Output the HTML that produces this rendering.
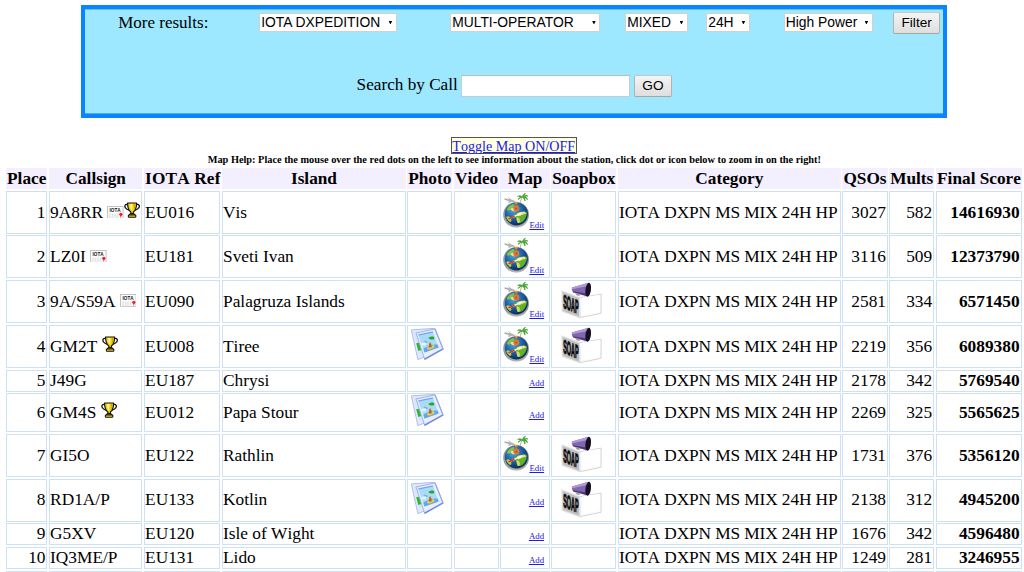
<!DOCTYPE html>
<html lang="en"><head><meta charset="utf-8"><title>IOTA Contest Results</title>
<style>
html,body{margin:0;padding:0;background:#fff;}
body{width:1024px;height:572px;overflow:hidden;position:relative;font-family:"Liberation Serif",serif;font-size:17.25px;color:#000;font-kerning:none;}
#panel{position:absolute;left:81px;top:5px;width:858px;height:105px;border:4px solid #0a84ff;background:#9ee8ff;box-shadow:inset 0 1px 0 #63c0ff,inset 0 -1px 0 #45acff;}
#panel{margin:0;padding:0;}
#panel>*{position:absolute;white-space:nowrap;margin:0;}
.lbl{font-size:17px;line-height:20px;}
#more{left:33.2px;top:3.5px;}
#sbc{left:271.6px;top:65.8px;font-size:17.2px;}
.sw{box-sizing:border-box;height:18.5px;top:4.3px;background:#fff;border:1px solid #d2d0cc;border-radius:1px;}
.sw select{-webkit-appearance:none;appearance:none;position:absolute;left:0;top:-2px;box-sizing:border-box;width:100%;height:18.5px;margin:0;background:transparent;border:0;border-radius:0;font-family:"Liberation Sans",sans-serif;font-size:13.85px;padding:0 0 0 1.2px;color:#000;outline:0;}
.sw i{position:absolute;right:3.2px;top:6.5px;width:3.8px;height:3.7px;background:#000;clip-path:polygon(0 0,100% 0,50% 100%);}
#s1{left:174px;width:137.5px;}
#s2{left:365px;width:150px;}
#s3{left:540px;width:62.5px;}
#s4{left:621px;width:43.5px;}
#s5{left:698.5px;width:89px;}
.btn{box-sizing:border-box;padding:0;-webkit-appearance:none;appearance:none;font-family:"Liberation Sans",sans-serif;font-size:13.65px;text-align:center;color:#000;border:1px solid #b4b2b0;border-top-color:#c6c6c6;border-bottom-color:#a8a4a0;border-radius:2px;background:linear-gradient(#f4f4f4,#dedede);}
#filter{left:808px;top:3px;width:47.3px;height:21.7px;line-height:19.4px;}
#go{left:548.6px;top:66px;width:38.6px;height:21.7px;line-height:19.6px;}
#inp{box-sizing:border-box;padding:0;-webkit-appearance:none;appearance:none;outline:0;left:376.2px;top:66px;width:168.6px;height:21.7px;background:#fff;border:1px solid #c4ccd4;border-top-color:#b4bcc4;}
#toggle{position:absolute;left:451px;top:137px;width:123.5px;height:14.5px;border:1px solid #55554a;background:#ffffe1;font-size:14.1px;line-height:17.4px;color:#1a1aee;text-decoration:underline;text-align:center;white-space:nowrap;}
#help{position:absolute;left:207.7px;top:153.5px;font-size:10.32px;font-weight:bold;line-height:12px;white-space:nowrap;}
#t{position:absolute;left:6.05px;top:167.75px;border-collapse:separate;border-spacing:0;table-layout:fixed;}
#t th{box-sizing:border-box;background:#f3effe;font-weight:bold;padding:0 1px;height:21.05px;line-height:19.5px;white-space:nowrap;overflow:visible;}
#t td{border:1px solid #cde0f5;padding:0;font-size:17.33px;line-height:19.5px;white-space:nowrap;vertical-align:middle;box-sizing:border-box;}
#t td.r{text-align:right;}
#t td.b{font-weight:bold;}
#t svg{vertical-align:baseline;}
a.e{font-size:8.85px;line-height:10px;color:#2418ee;text-decoration:underline;}
svg.soap{margin-left:8.5px;}
svg.globe{margin-left:1px;}
#t td.r{padding-right:.9px;}#t td.b{padding-right:1.3px;}
svg.photo{margin-left:2.9px;}
a.add{margin-left:27.5px;}
#t tr.g td{border:0;padding:0;line-height:0;font-size:0;height:auto;}
#t td.sp{border:0;padding:0;background:none;}
#t td.cat{letter-spacing:-.11px;}
#t th.ir{letter-spacing:.15px;}
#t svg.card{vertical-align:-.4px;}
</style></head>
<body>
<svg width="0" height="0" style="position:absolute" aria-hidden="true"><defs><radialGradient id="gg" cx="0.38" cy="0.32" r="0.75"><stop offset="0" stop-color="#56a8dc"/><stop offset="0.5" stop-color="#1b62ac"/><stop offset="1" stop-color="#08224f"/></radialGradient><linearGradient id="gr" x1="0" y1="0" x2="0" y2="1"><stop offset="0" stop-color="#8a8a8a"/><stop offset="0.7" stop-color="#9a9a9a"/><stop offset="0.93" stop-color="#a8a8a8"/><stop offset="1" stop-color="#c4c4c4"/></linearGradient></defs></svg>
<form id="panel">
<label class="lbl" id="more">More results:</label>
<span class="sw" id="s1"><select><option>IOTA DXPEDITION</option></select><i></i></span>
<span class="sw" id="s2"><select><option>MULTI-OPERATOR</option></select><i></i></span>
<span class="sw" id="s3"><select><option>MIXED</option></select><i></i></span>
<span class="sw" id="s4"><select><option>24H</option></select><i></i></span>
<span class="sw" id="s5"><select><option>High Power</option></select><i></i></span>
<button type="button" class="btn" id="filter">Filter</button>
<label class="lbl" id="sbc">Search by Call</label>
<input type="text" id="inp">
<button type="button" class="btn" id="go">GO</button>
</form>
<a id="toggle" href="#">Toggle Map ON/OFF</a>
<div id="help">Map Help: Place the mouse over the red dots on the left to see information about the station, click dot or icon below to zoom in on the right!</div>
<table id="t" style="width:1015.843750px"><colgroup><col style="width:41.343750px"><col style="width:1.687500px"><col style="width:93.265625px"><col style="width:1.734375px"><col style="width:75.812500px"><col style="width:2.109375px"><col style="width:183.890625px"><col style="width:1.265625px"><col style="width:44.984375px"><col style="width:1.937500px"><col style="width:44.875000px"><col style="width:1.437500px"><col style="width:49.437500px"><col style="width:1.328125px"><col style="width:65.187500px"><col style="width:1.734375px"><col style="width:222.515625px"><col style="width:1.484375px"><col style="width:45.796875px"><col style="width:1.281250px"><col style="width:44.937500px"><col style="width:1.984375px"><col style="width:85.812500px"></colgroup>
<tr class="h" style="height:21.046875px"><th>Place</th><td class="sp"></td><th>Callsign</th><td class="sp"></td><th class="ir">IOTA Ref</th><td class="sp"></td><th>Island</th><td class="sp"></td><th>Photo</th><td class="sp"></td><th>Video</th><td class="sp"></td><th>Map</th><td class="sp"></td><th>Soapbox</th><td class="sp"></td><th>Category</th><td class="sp"></td><th>QSOs</th><td class="sp"></td><th>Mults</th><td class="sp"></td><th>Final Score</th></tr>
<tr class="g" style="height:2.031250px"><td colspan="23"></td></tr>
<tr style="height:43.000000px"><td class="r">1</td><td class="sp"></td><td>9A8RR <svg class="card" width="16.6" height="12.8" viewBox="0 0 33 25.500"><rect x="1" y="1" width="31" height="23.500" fill="#fdfdfd" stroke="#c2c2c2" stroke-width="2"/><text x="5" y="11.800" font-family="Liberation Sans,sans-serif" font-weight="bold" font-size="10" fill="#141414" textLength="22" lengthAdjust="spacingAndGlyphs">IOTA</text><path d="M6 15v7.500M11 15v7.500M16 15v7.500M21 15v7.500" stroke="#e2e2e2" stroke-width="3"/><circle cx="27.500" cy="16.500" r="3.200" fill="#e8202a"/><path d="M26 18.500l1.500 5.500 1.500-5.500z" fill="#e8202a"/></svg><svg class="trophy" width="16.2" height="16" viewBox="0 0 32 32"><path d="M7 5C2 4 0 8 3 12c2 3 5 4 8 5" fill="none" stroke="#111" stroke-width="2.6"/><path d="M25 5c5-1 7 3 4 7-2 3-5 4-8 5" fill="none" stroke="#111" stroke-width="2.6"/><path d="M7 2h18c0 9-2 15-6.500 18v4h-5v-4C9 17 7 11 7 2z" fill="#f5d90a" stroke="#111" stroke-width="2.4" stroke-linejoin="round"/><path d="M12.500 4h4c0 6-0.500 10-1.500 13-2-3-2.500-7-2.500-13z" fill="#fff8b0"/><path d="M19 4h3.500c0 6-1 10-3 13 0-4 0-9-0.500-13z" fill="#d9a800"/><path d="M12 23h8l2 3H10z" fill="#e0b400" stroke="#111" stroke-width="2" stroke-linejoin="round"/><rect x="8.500" y="26" width="15" height="4.500" rx="1.500" fill="#f0cc10" stroke="#111" stroke-width="2.200"/></svg></td><td class="sp"></td><td>EU016</td><td class="sp"></td><td>Vis</td><td class="sp"></td><td class="p"></td><td class="sp"></td><td></td><td class="sp"></td><td class="m"><svg class="globe" width="27" height="36" viewBox="0 0 27 36"><circle cx="14.100" cy="22.800" r="12.900" fill="url(#gr)"/><circle cx="14.400" cy="21.900" r="11.500" fill="url(#gg)"/><path d="M5 17c1.500-2.500 4-4.500 7-5 .8 1.200 0 2.600-1.300 3.500S9 18 7.200 18.500 5 18.200 5 17z" fill="#86c440"/><path d="M8.500 16.800c1.500-1.200 4-1.300 5.500-.3s1 2.200-.5 2.700-4.500-.2-5-2.400z" fill="#f0e090"/><path d="M10.500 24c2-2 6-4 10-4.500 2.200-.3 3.800.2 4.500 1.200-.3 3.400-2 6.800-4.500 9-1.800 1.200-3.500 1.500-5 1-.5-1.500-.3-3-1-4.500s-2-.8-3 0-1.500-1-1-2.200z" fill="#5fb12e"/><path d="M15 21.500c2.200-1.200 5.500-2 8-1.600l1.200 1.600c-2 .6-4.300 1.200-5.800 2.300s-3.800 0-3.400-2.300z" fill="#efe088"/><path d="M14.500 25.500c1.500-.5 3 .5 3.300 2.500s-.5 3.500-1.600 3-1.900-3.500-1.700-5.500z" fill="#d8d860"/><path d="M4.300 25c1-1.200 2.800-.8 3.800.4s1.800 3.600.7 4.300-4-2.300-4.500-4.700z" fill="#b8d436"/><path d="M7 26.800L19 21.300" stroke="#fff" stroke-width="1.300" stroke-linecap="round"/><path d="M7 26.800L12 24.500" stroke="#e03020" stroke-width="1.500" stroke-linecap="round"/><g transform="translate(20.500 5) scale(.82) translate(-20 -5)"><path d="M17.200 12.500C17.500 9.500 18.500 7 20 5" fill="none" stroke="#b9a070" stroke-width="1.100"/><path d="M20 5c-2-2-4.500-2-6-.5 1.500-.5 3 0 4 1-1.500 0-3 1-3.500 2.500 1.500-1.500 3.500-2 5.500-3zM20 5c0-2 1.500-4 3.500-4.500-1 1-1.500 2.500-1.500 3.500 1.500-1.500 3.500-1.500 4.500 0-1.500-.5-3 0-4 .8 2 0 3.500 1.500 3.500 3.500-1-1.500-2.500-2.500-4-2.300 1 1 1.500 2.500 1 4-.5-2-1.500-3.500-3-5z" fill="#4cb030" stroke="#3c9a28" stroke-width=".8" stroke-linejoin="round"/></g><path d="M2.800 6.800l7.500 1.400 2.300 1.200-2.800-.1-3 1.200.6-1.700-4.600-1.400zM6.500 5.300l2.600 2.700" fill="#b8b8b8" stroke="#a6a6a6" stroke-width=".8" stroke-linejoin="round"/><circle cx="14.300" cy="10.800" r="1.400" fill="#f0a020"/><rect x="13.600" y="11.500" width="1.500" height="4" fill="#c86a28"/><circle cx="14.300" cy="16.600" r="3" fill="#e07830"/><circle cx="14.300" cy="16.600" r="1.100" fill="#a85a30"/></svg><a class="e" href="#">Edit</a></td><td class="sp"></td><td class="s"></td><td class="sp"></td><td class="cat">IOTA DXPN MS MIX 24H HP</td><td class="sp"></td><td class="r q">3027</td><td class="sp"></td><td class="r">582</td><td class="sp"></td><td class="r b">14616930</td></tr>
<tr class="g" style="height:1.453125px"><td colspan="23"></td></tr>
<tr style="height:43.093750px"><td class="r">2</td><td class="sp"></td><td>LZ0I <svg class="card" width="16.6" height="12.8" viewBox="0 0 33 25.500"><rect x="1" y="1" width="31" height="23.500" fill="#fdfdfd" stroke="#c2c2c2" stroke-width="2"/><text x="5" y="11.800" font-family="Liberation Sans,sans-serif" font-weight="bold" font-size="10" fill="#141414" textLength="22" lengthAdjust="spacingAndGlyphs">IOTA</text><path d="M6 15v7.500M11 15v7.500M16 15v7.500M21 15v7.500" stroke="#e2e2e2" stroke-width="3"/><circle cx="27.500" cy="16.500" r="3.200" fill="#e8202a"/><path d="M26 18.500l1.500 5.500 1.500-5.500z" fill="#e8202a"/></svg></td><td class="sp"></td><td>EU181</td><td class="sp"></td><td>Sveti Ivan</td><td class="sp"></td><td class="p"></td><td class="sp"></td><td></td><td class="sp"></td><td class="m"><svg class="globe" width="27" height="36" viewBox="0 0 27 36"><circle cx="14.100" cy="22.800" r="12.900" fill="url(#gr)"/><circle cx="14.400" cy="21.900" r="11.500" fill="url(#gg)"/><path d="M5 17c1.500-2.500 4-4.500 7-5 .8 1.200 0 2.600-1.300 3.500S9 18 7.200 18.500 5 18.200 5 17z" fill="#86c440"/><path d="M8.500 16.800c1.500-1.200 4-1.300 5.500-.3s1 2.200-.5 2.700-4.500-.2-5-2.400z" fill="#f0e090"/><path d="M10.500 24c2-2 6-4 10-4.500 2.200-.3 3.800.2 4.500 1.200-.3 3.400-2 6.800-4.500 9-1.800 1.200-3.500 1.500-5 1-.5-1.500-.3-3-1-4.500s-2-.8-3 0-1.500-1-1-2.200z" fill="#5fb12e"/><path d="M15 21.500c2.200-1.200 5.500-2 8-1.600l1.200 1.600c-2 .6-4.300 1.200-5.800 2.300s-3.800 0-3.400-2.300z" fill="#efe088"/><path d="M14.500 25.500c1.500-.5 3 .5 3.300 2.500s-.5 3.500-1.600 3-1.900-3.500-1.700-5.500z" fill="#d8d860"/><path d="M4.300 25c1-1.200 2.800-.8 3.800.4s1.800 3.600.7 4.300-4-2.300-4.500-4.700z" fill="#b8d436"/><path d="M7 26.800L19 21.300" stroke="#fff" stroke-width="1.300" stroke-linecap="round"/><path d="M7 26.800L12 24.500" stroke="#e03020" stroke-width="1.500" stroke-linecap="round"/><g transform="translate(20.500 5) scale(.82) translate(-20 -5)"><path d="M17.200 12.500C17.500 9.500 18.500 7 20 5" fill="none" stroke="#b9a070" stroke-width="1.100"/><path d="M20 5c-2-2-4.500-2-6-.5 1.500-.5 3 0 4 1-1.500 0-3 1-3.500 2.500 1.500-1.500 3.500-2 5.500-3zM20 5c0-2 1.500-4 3.500-4.500-1 1-1.500 2.500-1.500 3.500 1.500-1.500 3.500-1.500 4.500 0-1.500-.5-3 0-4 .8 2 0 3.500 1.500 3.500 3.500-1-1.500-2.500-2.500-4-2.300 1 1 1.500 2.500 1 4-.5-2-1.500-3.500-3-5z" fill="#4cb030" stroke="#3c9a28" stroke-width=".8" stroke-linejoin="round"/></g><path d="M2.800 6.800l7.500 1.400 2.300 1.200-2.800-.1-3 1.200.6-1.700-4.600-1.400zM6.500 5.300l2.600 2.700" fill="#b8b8b8" stroke="#a6a6a6" stroke-width=".8" stroke-linejoin="round"/><circle cx="14.300" cy="10.800" r="1.400" fill="#f0a020"/><rect x="13.600" y="11.500" width="1.500" height="4" fill="#c86a28"/><circle cx="14.300" cy="16.600" r="3" fill="#e07830"/><circle cx="14.300" cy="16.600" r="1.100" fill="#a85a30"/></svg><a class="e" href="#">Edit</a></td><td class="sp"></td><td class="s"></td><td class="sp"></td><td class="cat">IOTA DXPN MS MIX 24H HP</td><td class="sp"></td><td class="r q">3116</td><td class="sp"></td><td class="r">509</td><td class="sp"></td><td class="r b">12373790</td></tr>
<tr class="g" style="height:1.562500px"><td colspan="23"></td></tr>
<tr style="height:43.046875px"><td class="r">3</td><td class="sp"></td><td>9A/S59A <svg class="card" width="16.6" height="12.8" viewBox="0 0 33 25.500"><rect x="1" y="1" width="31" height="23.500" fill="#fdfdfd" stroke="#c2c2c2" stroke-width="2"/><text x="5" y="11.800" font-family="Liberation Sans,sans-serif" font-weight="bold" font-size="10" fill="#141414" textLength="22" lengthAdjust="spacingAndGlyphs">IOTA</text><path d="M6 15v7.500M11 15v7.500M16 15v7.500M21 15v7.500" stroke="#e2e2e2" stroke-width="3"/><circle cx="27.500" cy="16.500" r="3.200" fill="#e8202a"/><path d="M26 18.500l1.500 5.500 1.500-5.500z" fill="#e8202a"/></svg></td><td class="sp"></td><td>EU090</td><td class="sp"></td><td>Palagruza Islands</td><td class="sp"></td><td class="p"></td><td class="sp"></td><td></td><td class="sp"></td><td class="m"><svg class="globe" width="27" height="36" viewBox="0 0 27 36"><circle cx="14.100" cy="22.800" r="12.900" fill="url(#gr)"/><circle cx="14.400" cy="21.900" r="11.500" fill="url(#gg)"/><path d="M5 17c1.500-2.500 4-4.500 7-5 .8 1.200 0 2.600-1.300 3.500S9 18 7.200 18.500 5 18.200 5 17z" fill="#86c440"/><path d="M8.500 16.800c1.500-1.200 4-1.300 5.500-.3s1 2.200-.5 2.700-4.500-.2-5-2.400z" fill="#f0e090"/><path d="M10.500 24c2-2 6-4 10-4.500 2.200-.3 3.800.2 4.500 1.200-.3 3.400-2 6.800-4.500 9-1.800 1.200-3.500 1.500-5 1-.5-1.500-.3-3-1-4.500s-2-.8-3 0-1.500-1-1-2.200z" fill="#5fb12e"/><path d="M15 21.500c2.200-1.200 5.500-2 8-1.600l1.200 1.600c-2 .6-4.300 1.200-5.800 2.300s-3.800 0-3.400-2.300z" fill="#efe088"/><path d="M14.500 25.500c1.500-.5 3 .5 3.300 2.500s-.5 3.500-1.600 3-1.900-3.500-1.700-5.500z" fill="#d8d860"/><path d="M4.300 25c1-1.200 2.800-.8 3.800.4s1.800 3.600.7 4.300-4-2.300-4.500-4.700z" fill="#b8d436"/><path d="M7 26.800L19 21.300" stroke="#fff" stroke-width="1.300" stroke-linecap="round"/><path d="M7 26.800L12 24.500" stroke="#e03020" stroke-width="1.500" stroke-linecap="round"/><g transform="translate(20.500 5) scale(.82) translate(-20 -5)"><path d="M17.200 12.500C17.500 9.500 18.500 7 20 5" fill="none" stroke="#b9a070" stroke-width="1.100"/><path d="M20 5c-2-2-4.500-2-6-.5 1.500-.5 3 0 4 1-1.500 0-3 1-3.500 2.500 1.500-1.500 3.500-2 5.500-3zM20 5c0-2 1.500-4 3.500-4.500-1 1-1.500 2.500-1.500 3.500 1.500-1.500 3.500-1.500 4.500 0-1.500-.5-3 0-4 .8 2 0 3.500 1.500 3.500 3.500-1-1.500-2.500-2.500-4-2.300 1 1 1.500 2.500 1 4-.5-2-1.500-3.500-3-5z" fill="#4cb030" stroke="#3c9a28" stroke-width=".8" stroke-linejoin="round"/></g><path d="M2.800 6.800l7.500 1.400 2.300 1.200-2.800-.1-3 1.200.6-1.700-4.600-1.400zM6.500 5.300l2.600 2.700" fill="#b8b8b8" stroke="#a6a6a6" stroke-width=".8" stroke-linejoin="round"/><circle cx="14.300" cy="10.800" r="1.400" fill="#f0a020"/><rect x="13.600" y="11.500" width="1.500" height="4" fill="#c86a28"/><circle cx="14.300" cy="16.600" r="3" fill="#e07830"/><circle cx="14.300" cy="16.600" r="1.100" fill="#a85a30"/></svg><a class="e" href="#">Edit</a></td><td class="sp"></td><td class="s"><svg class="soap" width="44" height="36" viewBox="0 0 44 36" style="overflow:visible"><g transform="translate(0,-2.500)"><path d="M18.500 19.200L40.200 15.600 40 34.800 18.800 39.200z" fill="#fbfbfb" stroke="#cfcfcf" stroke-width=".9"/><path d="M21.500 19L39 16.200 38.800 33.200 21.500 36.800z" fill="#fff"/><path d="M1 12.500L18.500 19.200 18.800 39.200 1.200 32.800z" fill="#c4c4c4" stroke="#e2e2e2" stroke-width="1.200"/><path d="M2.300 14.600L17.300 20.400 17.500 37.200 2.500 31.600z" fill="#bcbcbc"/></g><text transform="matrix(1,0.39,0,1,2.200,26.800)" font-family="Liberation Sans,sans-serif" font-weight="bold" font-size="19" fill="#0a0a0a" stroke="#0a0a0a" stroke-width=".95" stroke-linejoin="round" textLength="15.5" lengthAdjust="spacingAndGlyphs">SOAP</text><path d="M11 6.500L27.500 1.800C30.500 4.500 30.500 12.500 27 15.500L12.500 11.500C10.800 10.500 10.500 7.500 11 6.500z" fill="#8266b0"/><path d="M11 6.500L27.500 1.800c.8.700 1.300 1.600 1.700 2.800L11.200 8.200c-.3-.7-.3-1.300-.2-1.700z" fill="#b09ad6"/><path d="M12.500 11.500L27 15.500c.8-.700 1.300-1.600 1.700-2.600L11.800 10.300c.2.600.4 1 .7 1.200z" fill="#4e3a78"/><ellipse cx="27.200" cy="8.600" rx="2.700" ry="6.900" fill="#14101c" transform="rotate(8 27.200 8.600)"/><path d="M14 11.800l1.500 2.500 3.500 1-1-2.600z" fill="#9a9a9a"/></svg></td><td class="sp"></td><td class="cat">IOTA DXPN MS MIX 24H HP</td><td class="sp"></td><td class="r q">2581</td><td class="sp"></td><td class="r">334</td><td class="sp"></td><td class="r b">6571450</td></tr>
<tr class="g" style="height:2.000000px"><td colspan="23"></td></tr>
<tr style="height:42.921875px"><td class="r">4</td><td class="sp"></td><td>GM2T <svg class="trophy" width="16.2" height="16" viewBox="0 0 32 32"><path d="M7 5C2 4 0 8 3 12c2 3 5 4 8 5" fill="none" stroke="#111" stroke-width="2.6"/><path d="M25 5c5-1 7 3 4 7-2 3-5 4-8 5" fill="none" stroke="#111" stroke-width="2.6"/><path d="M7 2h18c0 9-2 15-6.500 18v4h-5v-4C9 17 7 11 7 2z" fill="#f5d90a" stroke="#111" stroke-width="2.4" stroke-linejoin="round"/><path d="M12.500 4h4c0 6-0.500 10-1.500 13-2-3-2.500-7-2.500-13z" fill="#fff8b0"/><path d="M19 4h3.500c0 6-1 10-3 13 0-4 0-9-0.500-13z" fill="#d9a800"/><path d="M12 23h8l2 3H10z" fill="#e0b400" stroke="#111" stroke-width="2" stroke-linejoin="round"/><rect x="8.500" y="26" width="15" height="4.500" rx="1.500" fill="#f0cc10" stroke="#111" stroke-width="2.200"/></svg></td><td class="sp"></td><td>EU008</td><td class="sp"></td><td>Tiree</td><td class="sp"></td><td class="p"><svg class="photo" width="33" height="32" viewBox="0 0 33 32"><path d="M0.300 1.900L23.600 0.300 30.500 21.500 6.900 31.700z" fill="#e2e9fd" stroke="#9db0ee" stroke-width=".8" stroke-linejoin="round"/><path d="M2.400 3.900L9 3.400 13.500 24 7.800 26.500z" fill="#d5e6fb"/><path d="M5.200 15.300L8.300 14.700 10.300 22 7.300 23z" fill="#35b52f"/><path d="M5 5L24.300 0.900 32.400 21.200 13.800 31.700z" fill="#e9eefe" stroke="#8fa2ea" stroke-width=".8" stroke-linejoin="round"/><path d="M32.400 21.200L13.800 31.700 13.300 30.600 31.800 20.200z" fill="#6e84dc"/><path d="M24.300 0.900L32.400 21.200 31.600 21.600 23.500 1.200z" fill="#8da0e8"/><path d="M7.100 6.400L21.800 3.500 27.700 19.500 13.500 24.600z" fill="#a6dcf8"/><path d="M7.100 6.400L21.800 3.500 22.200 4.600 7.500 7.600z" fill="#6f9fe6"/><path d="M12.300 21c3-2.500 9-4.500 14.300-4.500l1.100 3-14.200 5.100z" fill="#58aaec"/><ellipse cx="13" cy="16" rx="2.600" ry="1.700" fill="#eef8fe" opacity=".8"/><ellipse cx="19.800" cy="19.400" rx="4.200" ry="1.600" fill="#f4c64c" transform="rotate(-20 19.800 19.400)"/><path d="M17.800 18.900c0-1.800.4-3.800 1.300-4.700.9.900 1.700 3 1.700 4.700-.9.700-2.100.7-3 0z" fill="#b8682c"/><path d="M17.300 10c1.200-1.400 3.800-2 5.500-1.200.8.900.6 2-.3 2.600-1.700.5-3.800 0-5.200-1.400z" fill="#2fa32f"/><path d="M12.700 13.500l4 .7M14 12.500l1.800 2.300" stroke="#8a9aac" stroke-width=".8"/></svg></td><td class="sp"></td><td></td><td class="sp"></td><td class="m"><svg class="globe" width="27" height="36" viewBox="0 0 27 36"><circle cx="14.100" cy="22.800" r="12.900" fill="url(#gr)"/><circle cx="14.400" cy="21.900" r="11.500" fill="url(#gg)"/><path d="M5 17c1.500-2.500 4-4.500 7-5 .8 1.200 0 2.600-1.300 3.500S9 18 7.200 18.500 5 18.200 5 17z" fill="#86c440"/><path d="M8.500 16.800c1.500-1.200 4-1.300 5.500-.3s1 2.200-.5 2.700-4.500-.2-5-2.400z" fill="#f0e090"/><path d="M10.500 24c2-2 6-4 10-4.500 2.200-.3 3.800.2 4.500 1.200-.3 3.400-2 6.800-4.500 9-1.800 1.200-3.500 1.500-5 1-.5-1.500-.3-3-1-4.500s-2-.8-3 0-1.500-1-1-2.200z" fill="#5fb12e"/><path d="M15 21.500c2.200-1.200 5.500-2 8-1.600l1.200 1.600c-2 .6-4.300 1.200-5.800 2.300s-3.800 0-3.400-2.300z" fill="#efe088"/><path d="M14.500 25.500c1.500-.5 3 .5 3.300 2.500s-.5 3.500-1.600 3-1.900-3.500-1.700-5.500z" fill="#d8d860"/><path d="M4.300 25c1-1.200 2.800-.8 3.800.4s1.800 3.600.7 4.300-4-2.300-4.500-4.700z" fill="#b8d436"/><path d="M7 26.800L19 21.300" stroke="#fff" stroke-width="1.300" stroke-linecap="round"/><path d="M7 26.800L12 24.500" stroke="#e03020" stroke-width="1.500" stroke-linecap="round"/><g transform="translate(20.500 5) scale(.82) translate(-20 -5)"><path d="M17.200 12.500C17.500 9.500 18.500 7 20 5" fill="none" stroke="#b9a070" stroke-width="1.100"/><path d="M20 5c-2-2-4.500-2-6-.5 1.500-.5 3 0 4 1-1.500 0-3 1-3.500 2.500 1.500-1.500 3.500-2 5.500-3zM20 5c0-2 1.500-4 3.500-4.500-1 1-1.500 2.500-1.500 3.500 1.500-1.500 3.500-1.500 4.500 0-1.500-.5-3 0-4 .8 2 0 3.500 1.500 3.500 3.500-1-1.500-2.500-2.500-4-2.300 1 1 1.500 2.500 1 4-.5-2-1.500-3.500-3-5z" fill="#4cb030" stroke="#3c9a28" stroke-width=".8" stroke-linejoin="round"/></g><path d="M2.800 6.800l7.500 1.400 2.300 1.200-2.800-.1-3 1.200.6-1.700-4.600-1.400zM6.500 5.300l2.600 2.700" fill="#b8b8b8" stroke="#a6a6a6" stroke-width=".8" stroke-linejoin="round"/><circle cx="14.300" cy="10.800" r="1.400" fill="#f0a020"/><rect x="13.600" y="11.500" width="1.500" height="4" fill="#c86a28"/><circle cx="14.300" cy="16.600" r="3" fill="#e07830"/><circle cx="14.300" cy="16.600" r="1.100" fill="#a85a30"/></svg><a class="e" href="#">Edit</a></td><td class="sp"></td><td class="s"><svg class="soap" width="44" height="36" viewBox="0 0 44 36" style="overflow:visible"><g transform="translate(0,-2.500)"><path d="M18.500 19.200L40.200 15.600 40 34.800 18.800 39.200z" fill="#fbfbfb" stroke="#cfcfcf" stroke-width=".9"/><path d="M21.500 19L39 16.200 38.800 33.200 21.500 36.800z" fill="#fff"/><path d="M1 12.500L18.500 19.200 18.800 39.200 1.200 32.800z" fill="#c4c4c4" stroke="#e2e2e2" stroke-width="1.200"/><path d="M2.300 14.600L17.300 20.400 17.500 37.200 2.500 31.600z" fill="#bcbcbc"/></g><text transform="matrix(1,0.39,0,1,2.200,26.800)" font-family="Liberation Sans,sans-serif" font-weight="bold" font-size="19" fill="#0a0a0a" stroke="#0a0a0a" stroke-width=".95" stroke-linejoin="round" textLength="15.5" lengthAdjust="spacingAndGlyphs">SOAP</text><path d="M11 6.500L27.500 1.800C30.500 4.500 30.500 12.500 27 15.500L12.500 11.500C10.800 10.500 10.500 7.500 11 6.500z" fill="#8266b0"/><path d="M11 6.500L27.500 1.800c.8.700 1.300 1.600 1.700 2.800L11.200 8.200c-.3-.7-.3-1.300-.2-1.700z" fill="#b09ad6"/><path d="M12.500 11.500L27 15.500c.8-.700 1.300-1.600 1.700-2.600L11.800 10.300c.2.600.4 1 .7 1.200z" fill="#4e3a78"/><ellipse cx="27.200" cy="8.600" rx="2.700" ry="6.900" fill="#14101c" transform="rotate(8 27.200 8.600)"/><path d="M14 11.800l1.500 2.500 3.500 1-1-2.600z" fill="#9a9a9a"/></svg></td><td class="sp"></td><td class="cat">IOTA DXPN MS MIX 24H HP</td><td class="sp"></td><td class="r q">2219</td><td class="sp"></td><td class="r">356</td><td class="sp"></td><td class="r b">6089380</td></tr>
<tr class="g" style="height:1.687500px"><td colspan="23"></td></tr>
<tr style="height:22.312500px"><td class="r">5</td><td class="sp"></td><td>J49G </td><td class="sp"></td><td>EU187</td><td class="sp"></td><td>Chrysi</td><td class="sp"></td><td class="p"></td><td class="sp"></td><td></td><td class="sp"></td><td class="m"><a class="e add" href="#">Add</a></td><td class="sp"></td><td class="s"></td><td class="sp"></td><td class="cat">IOTA DXPN MS MIX 24H HP</td><td class="sp"></td><td class="r q">2178</td><td class="sp"></td><td class="r">342</td><td class="sp"></td><td class="r b">5769540</td></tr>
<tr class="g" style="height:1.515625px"><td colspan="23"></td></tr>
<tr style="height:38.625000px"><td class="r">6</td><td class="sp"></td><td>GM4S <svg class="trophy" width="16.2" height="16" viewBox="0 0 32 32"><path d="M7 5C2 4 0 8 3 12c2 3 5 4 8 5" fill="none" stroke="#111" stroke-width="2.6"/><path d="M25 5c5-1 7 3 4 7-2 3-5 4-8 5" fill="none" stroke="#111" stroke-width="2.6"/><path d="M7 2h18c0 9-2 15-6.500 18v4h-5v-4C9 17 7 11 7 2z" fill="#f5d90a" stroke="#111" stroke-width="2.4" stroke-linejoin="round"/><path d="M12.500 4h4c0 6-0.500 10-1.500 13-2-3-2.500-7-2.500-13z" fill="#fff8b0"/><path d="M19 4h3.500c0 6-1 10-3 13 0-4 0-9-0.500-13z" fill="#d9a800"/><path d="M12 23h8l2 3H10z" fill="#e0b400" stroke="#111" stroke-width="2" stroke-linejoin="round"/><rect x="8.500" y="26" width="15" height="4.500" rx="1.500" fill="#f0cc10" stroke="#111" stroke-width="2.200"/></svg></td><td class="sp"></td><td>EU012</td><td class="sp"></td><td>Papa Stour</td><td class="sp"></td><td class="p"><svg class="photo" width="33" height="32" viewBox="0 0 33 32"><path d="M0.300 1.900L23.600 0.300 30.500 21.500 6.900 31.700z" fill="#e2e9fd" stroke="#9db0ee" stroke-width=".8" stroke-linejoin="round"/><path d="M2.400 3.900L9 3.400 13.500 24 7.800 26.500z" fill="#d5e6fb"/><path d="M5.200 15.300L8.300 14.700 10.300 22 7.300 23z" fill="#35b52f"/><path d="M5 5L24.300 0.900 32.400 21.200 13.800 31.700z" fill="#e9eefe" stroke="#8fa2ea" stroke-width=".8" stroke-linejoin="round"/><path d="M32.400 21.200L13.800 31.700 13.300 30.600 31.800 20.200z" fill="#6e84dc"/><path d="M24.300 0.900L32.400 21.200 31.600 21.600 23.500 1.200z" fill="#8da0e8"/><path d="M7.100 6.400L21.800 3.500 27.700 19.500 13.500 24.600z" fill="#a6dcf8"/><path d="M7.100 6.400L21.800 3.500 22.200 4.600 7.500 7.600z" fill="#6f9fe6"/><path d="M12.300 21c3-2.500 9-4.500 14.300-4.500l1.100 3-14.200 5.100z" fill="#58aaec"/><ellipse cx="13" cy="16" rx="2.600" ry="1.700" fill="#eef8fe" opacity=".8"/><ellipse cx="19.800" cy="19.400" rx="4.200" ry="1.600" fill="#f4c64c" transform="rotate(-20 19.800 19.400)"/><path d="M17.800 18.900c0-1.800.4-3.800 1.300-4.700.9.900 1.700 3 1.700 4.700-.9.700-2.100.7-3 0z" fill="#b8682c"/><path d="M17.300 10c1.200-1.400 3.800-2 5.500-1.200.8.900.6 2-.3 2.600-1.700.5-3.800 0-5.200-1.400z" fill="#2fa32f"/><path d="M12.700 13.500l4 .7M14 12.500l1.800 2.300" stroke="#8a9aac" stroke-width=".8"/></svg></td><td class="sp"></td><td></td><td class="sp"></td><td class="m"><a class="e add" href="#">Add</a></td><td class="sp"></td><td class="s"></td><td class="sp"></td><td class="cat">IOTA DXPN MS MIX 24H HP</td><td class="sp"></td><td class="r q">2269</td><td class="sp"></td><td class="r">325</td><td class="sp"></td><td class="r b">5565625</td></tr>
<tr class="g" style="height:1.937500px"><td colspan="23"></td></tr>
<tr style="height:42.921875px"><td class="r">7</td><td class="sp"></td><td>GI5O </td><td class="sp"></td><td>EU122</td><td class="sp"></td><td>Rathlin</td><td class="sp"></td><td class="p"></td><td class="sp"></td><td></td><td class="sp"></td><td class="m"><svg class="globe" width="27" height="36" viewBox="0 0 27 36"><circle cx="14.100" cy="22.800" r="12.900" fill="url(#gr)"/><circle cx="14.400" cy="21.900" r="11.500" fill="url(#gg)"/><path d="M5 17c1.500-2.500 4-4.500 7-5 .8 1.200 0 2.600-1.300 3.500S9 18 7.200 18.500 5 18.200 5 17z" fill="#86c440"/><path d="M8.500 16.800c1.500-1.200 4-1.300 5.500-.3s1 2.200-.5 2.700-4.500-.2-5-2.400z" fill="#f0e090"/><path d="M10.500 24c2-2 6-4 10-4.500 2.200-.3 3.800.2 4.500 1.200-.3 3.400-2 6.800-4.500 9-1.800 1.200-3.500 1.500-5 1-.5-1.500-.3-3-1-4.500s-2-.8-3 0-1.500-1-1-2.200z" fill="#5fb12e"/><path d="M15 21.500c2.200-1.200 5.500-2 8-1.600l1.200 1.600c-2 .6-4.300 1.200-5.800 2.300s-3.800 0-3.400-2.300z" fill="#efe088"/><path d="M14.500 25.500c1.500-.5 3 .5 3.300 2.500s-.5 3.500-1.600 3-1.900-3.500-1.700-5.500z" fill="#d8d860"/><path d="M4.300 25c1-1.200 2.800-.8 3.800.4s1.800 3.600.7 4.300-4-2.300-4.500-4.700z" fill="#b8d436"/><path d="M7 26.800L19 21.300" stroke="#fff" stroke-width="1.300" stroke-linecap="round"/><path d="M7 26.800L12 24.500" stroke="#e03020" stroke-width="1.500" stroke-linecap="round"/><g transform="translate(20.500 5) scale(.82) translate(-20 -5)"><path d="M17.200 12.500C17.500 9.500 18.500 7 20 5" fill="none" stroke="#b9a070" stroke-width="1.100"/><path d="M20 5c-2-2-4.500-2-6-.5 1.500-.5 3 0 4 1-1.500 0-3 1-3.500 2.500 1.500-1.500 3.500-2 5.500-3zM20 5c0-2 1.500-4 3.500-4.500-1 1-1.500 2.500-1.500 3.500 1.500-1.500 3.500-1.500 4.500 0-1.500-.5-3 0-4 .8 2 0 3.500 1.500 3.500 3.500-1-1.500-2.500-2.500-4-2.300 1 1 1.500 2.500 1 4-.5-2-1.500-3.500-3-5z" fill="#4cb030" stroke="#3c9a28" stroke-width=".8" stroke-linejoin="round"/></g><path d="M2.800 6.800l7.500 1.400 2.300 1.200-2.800-.1-3 1.200.6-1.700-4.600-1.400zM6.500 5.300l2.600 2.700" fill="#b8b8b8" stroke="#a6a6a6" stroke-width=".8" stroke-linejoin="round"/><circle cx="14.300" cy="10.800" r="1.400" fill="#f0a020"/><rect x="13.600" y="11.500" width="1.500" height="4" fill="#c86a28"/><circle cx="14.300" cy="16.600" r="3" fill="#e07830"/><circle cx="14.300" cy="16.600" r="1.100" fill="#a85a30"/></svg><a class="e" href="#">Edit</a></td><td class="sp"></td><td class="s"><svg class="soap" width="44" height="36" viewBox="0 0 44 36" style="overflow:visible"><g transform="translate(0,-2.500)"><path d="M18.500 19.200L40.200 15.600 40 34.800 18.800 39.200z" fill="#fbfbfb" stroke="#cfcfcf" stroke-width=".9"/><path d="M21.500 19L39 16.200 38.800 33.200 21.500 36.800z" fill="#fff"/><path d="M1 12.500L18.500 19.200 18.800 39.200 1.200 32.800z" fill="#c4c4c4" stroke="#e2e2e2" stroke-width="1.200"/><path d="M2.300 14.600L17.300 20.400 17.500 37.200 2.500 31.600z" fill="#bcbcbc"/></g><text transform="matrix(1,0.39,0,1,2.200,26.800)" font-family="Liberation Sans,sans-serif" font-weight="bold" font-size="19" fill="#0a0a0a" stroke="#0a0a0a" stroke-width=".95" stroke-linejoin="round" textLength="15.5" lengthAdjust="spacingAndGlyphs">SOAP</text><path d="M11 6.500L27.500 1.800C30.500 4.500 30.500 12.500 27 15.500L12.500 11.500C10.800 10.500 10.500 7.500 11 6.500z" fill="#8266b0"/><path d="M11 6.500L27.500 1.800c.8.700 1.300 1.600 1.700 2.800L11.200 8.200c-.3-.7-.3-1.300-.2-1.700z" fill="#b09ad6"/><path d="M12.500 11.500L27 15.500c.8-.700 1.300-1.600 1.700-2.600L11.800 10.300c.2.600.4 1 .7 1.200z" fill="#4e3a78"/><ellipse cx="27.200" cy="8.600" rx="2.700" ry="6.900" fill="#14101c" transform="rotate(8 27.200 8.600)"/><path d="M14 11.800l1.500 2.500 3.500 1-1-2.600z" fill="#9a9a9a"/></svg></td><td class="sp"></td><td class="cat">IOTA DXPN MS MIX 24H HP</td><td class="sp"></td><td class="r q">1731</td><td class="sp"></td><td class="r">376</td><td class="sp"></td><td class="r b">5356120</td></tr>
<tr class="g" style="height:1.687500px"><td colspan="23"></td></tr>
<tr style="height:43.171875px"><td class="r">8</td><td class="sp"></td><td>RD1A/P </td><td class="sp"></td><td>EU133</td><td class="sp"></td><td>Kotlin</td><td class="sp"></td><td class="p"><svg class="photo" width="33" height="32" viewBox="0 0 33 32"><path d="M0.300 1.900L23.600 0.300 30.500 21.500 6.900 31.700z" fill="#e2e9fd" stroke="#9db0ee" stroke-width=".8" stroke-linejoin="round"/><path d="M2.400 3.900L9 3.400 13.500 24 7.800 26.500z" fill="#d5e6fb"/><path d="M5.200 15.300L8.300 14.700 10.300 22 7.300 23z" fill="#35b52f"/><path d="M5 5L24.300 0.900 32.400 21.200 13.800 31.700z" fill="#e9eefe" stroke="#8fa2ea" stroke-width=".8" stroke-linejoin="round"/><path d="M32.400 21.200L13.800 31.700 13.300 30.600 31.800 20.200z" fill="#6e84dc"/><path d="M24.300 0.900L32.400 21.200 31.600 21.600 23.500 1.200z" fill="#8da0e8"/><path d="M7.100 6.400L21.800 3.500 27.700 19.500 13.500 24.600z" fill="#a6dcf8"/><path d="M7.100 6.400L21.800 3.500 22.200 4.600 7.500 7.600z" fill="#6f9fe6"/><path d="M12.300 21c3-2.500 9-4.500 14.300-4.500l1.100 3-14.200 5.100z" fill="#58aaec"/><ellipse cx="13" cy="16" rx="2.600" ry="1.700" fill="#eef8fe" opacity=".8"/><ellipse cx="19.800" cy="19.400" rx="4.200" ry="1.600" fill="#f4c64c" transform="rotate(-20 19.800 19.400)"/><path d="M17.800 18.900c0-1.800.4-3.800 1.300-4.700.9.900 1.700 3 1.700 4.700-.9.700-2.100.7-3 0z" fill="#b8682c"/><path d="M17.300 10c1.200-1.400 3.800-2 5.500-1.200.8.900.6 2-.3 2.600-1.700.5-3.800 0-5.200-1.400z" fill="#2fa32f"/><path d="M12.700 13.500l4 .7M14 12.500l1.800 2.300" stroke="#8a9aac" stroke-width=".8"/></svg></td><td class="sp"></td><td></td><td class="sp"></td><td class="m"><a class="e add" href="#">Add</a></td><td class="sp"></td><td class="s"><svg class="soap" width="44" height="36" viewBox="0 0 44 36" style="overflow:visible"><g transform="translate(0,-2.500)"><path d="M18.500 19.200L40.200 15.600 40 34.800 18.800 39.200z" fill="#fbfbfb" stroke="#cfcfcf" stroke-width=".9"/><path d="M21.500 19L39 16.200 38.800 33.200 21.500 36.800z" fill="#fff"/><path d="M1 12.500L18.500 19.200 18.800 39.200 1.200 32.800z" fill="#c4c4c4" stroke="#e2e2e2" stroke-width="1.200"/><path d="M2.300 14.600L17.300 20.400 17.500 37.200 2.500 31.600z" fill="#bcbcbc"/></g><text transform="matrix(1,0.39,0,1,2.200,26.800)" font-family="Liberation Sans,sans-serif" font-weight="bold" font-size="19" fill="#0a0a0a" stroke="#0a0a0a" stroke-width=".95" stroke-linejoin="round" textLength="15.5" lengthAdjust="spacingAndGlyphs">SOAP</text><path d="M11 6.500L27.500 1.800C30.500 4.500 30.500 12.500 27 15.500L12.500 11.500C10.800 10.500 10.500 7.500 11 6.500z" fill="#8266b0"/><path d="M11 6.500L27.500 1.800c.8.700 1.300 1.600 1.700 2.800L11.200 8.200c-.3-.7-.3-1.300-.2-1.700z" fill="#b09ad6"/><path d="M12.500 11.500L27 15.500c.8-.700 1.300-1.600 1.700-2.600L11.800 10.300c.2.600.4 1 .7 1.200z" fill="#4e3a78"/><ellipse cx="27.200" cy="8.600" rx="2.700" ry="6.900" fill="#14101c" transform="rotate(8 27.200 8.600)"/><path d="M14 11.800l1.500 2.500 3.500 1-1-2.600z" fill="#9a9a9a"/></svg></td><td class="sp"></td><td class="cat">IOTA DXPN MS MIX 24H HP</td><td class="sp"></td><td class="r q">2138</td><td class="sp"></td><td class="r">312</td><td class="sp"></td><td class="r b">4945200</td></tr>
<tr class="g" style="height:1.187500px"><td colspan="23"></td></tr>
<tr style="height:22.437500px"><td class="r">9</td><td class="sp"></td><td>G5XV </td><td class="sp"></td><td>EU120</td><td class="sp"></td><td>Isle of Wight</td><td class="sp"></td><td class="p"></td><td class="sp"></td><td></td><td class="sp"></td><td class="m"><a class="e add" href="#">Add</a></td><td class="sp"></td><td class="s"></td><td class="sp"></td><td class="cat">IOTA DXPN MS MIX 24H HP</td><td class="sp"></td><td class="r q">1676</td><td class="sp"></td><td class="r">342</td><td class="sp"></td><td class="r b">4596480</td></tr>
<tr class="g" style="height:1.515625px"><td colspan="23"></td></tr>
<tr style="height:22.359375px"><td class="r">10</td><td class="sp"></td><td>IQ3ME/P </td><td class="sp"></td><td>EU131</td><td class="sp"></td><td>Lido</td><td class="sp"></td><td class="p"></td><td class="sp"></td><td></td><td class="sp"></td><td class="m"><a class="e add" href="#">Add</a></td><td class="sp"></td><td class="s"></td><td class="sp"></td><td class="cat">IOTA DXPN MS MIX 24H HP</td><td class="sp"></td><td class="r q">1249</td><td class="sp"></td><td class="r">281</td><td class="sp"></td><td class="r b">3246955</td></tr>
<tr class="g" style="height:1.796875px"><td colspan="23"></td></tr>
<tr style="height:22.4px"><td class="r">11</td><td class="sp"></td><td></td><td class="sp"></td><td></td><td class="sp"></td><td></td><td class="sp"></td><td></td><td class="sp"></td><td></td><td class="sp"></td><td></td><td class="sp"></td><td></td><td class="sp"></td><td></td><td class="sp"></td><td></td><td class="sp"></td><td></td><td class="sp"></td><td></td></tr>
</table>
</body></html>
